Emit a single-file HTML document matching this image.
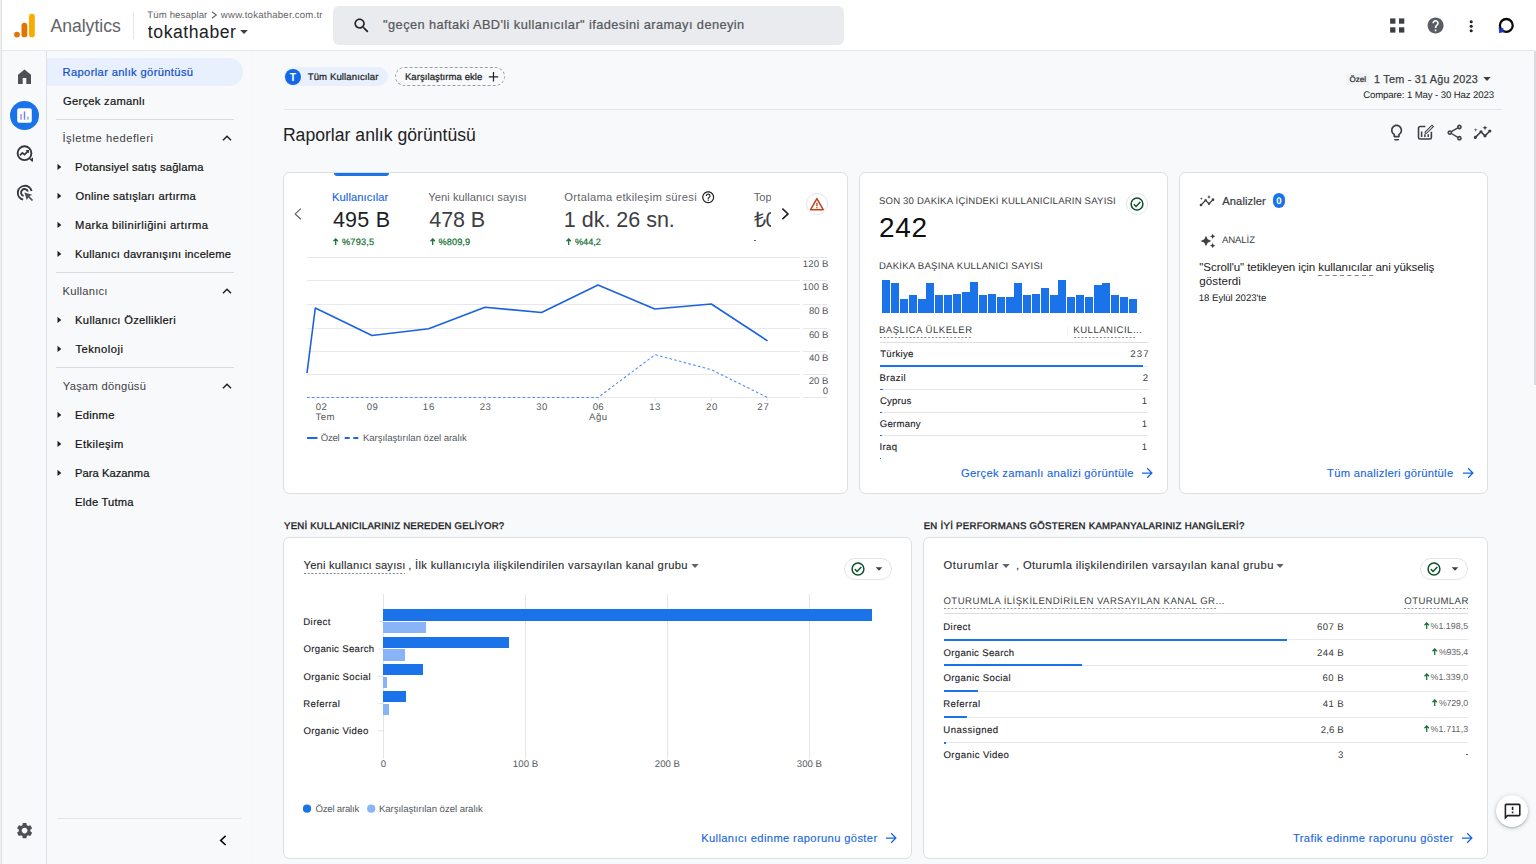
<!DOCTYPE html>
<html lang="tr">
<head>
<meta charset="utf-8">
<title>Analytics | Raporlar anlık görüntüsü</title>
<style>
*{box-sizing:border-box;margin:0;padding:0}
html,body{width:1536px;height:864px;overflow:hidden;background:#f8f9fa}
body{font-family:"Liberation Sans",sans-serif;color:#202124;position:relative}
.b,.t,.i{position:absolute;display:block}
.t{white-space:nowrap;line-height:40px;height:40px}
</style>
</head>
<body>
<div class="b" style="left:0px;top:0px;width:2px;height:864px;background:#f0f1f2;"></div>
<div class="b" style="left:1px;top:0px;width:1px;height:864px;background:#dcdee1;"></div>
<header>
<div class="b" style="left:2px;top:0px;width:1534px;height:50px;background:#fff;"></div>
<div class="b" style="left:2px;top:50px;width:1532px;height:1px;background:#e6e8eb;"></div>
<svg class="i" style="left:13px;top:13px;" width="23" height="25" viewBox="0 0 23 25"><rect x="16" y="0.750" width="5.800" height="23.550" rx="2.900" fill="#f9ab00"/><rect x="8.500" y="9.700" width="5.800" height="14.600" rx="2.900" fill="#e37400"/><circle cx="4" cy="21.550" r="2.850" fill="#e37400"/></svg>
<div class="t" style="top:6px;font-size:17.6px;color:#5f6368;letter-spacing:-0.03px;left:50.54px;">Analytics</div>
<div class="b" style="left:133px;top:12.5px;width:1px;height:26px;background:#e3e5e8;"></div>
<div class="t" style="top:-4px;font-size:9.6px;color:#5f6368;letter-spacing:0.12px;left:147.33px;text-rendering:geometricPrecision;">Tüm hesaplar</div>
<svg class="i" style="left:210px;top:10px;" width="8" height="10" viewBox="0 0 8 10"><path d="M2 1.700L6.300 5L2 8.300" fill="none" stroke="#5f6368" stroke-width="1.100"/></svg>
<div class="t" style="top:-4px;font-size:9.6px;color:#5f6368;letter-spacing:0.23px;left:220.86px;text-rendering:geometricPrecision;">www.tokathaber.com.tr</div>
<div class="t" style="top:12px;font-size:17.6px;color:#202124;letter-spacing:0.55px;left:147.86px;">tokathaber</div>
<svg class="i" style="left:238.9px;top:29.1px;" width="10" height="6" viewBox="0 0 10 6"><path d="M1.10 0.90H8.90L5 5.10Z" fill="#3c4043"/></svg>
<div class="b" style="left:333px;top:6px;width:511px;height:39px;background:#e9ebee;border-radius:6px;"></div>
<svg class="i" style="left:351.9px;top:15.9px;" width="19.2" height="19.2" viewBox="0 0 24 24" fill="#202124"><path d="M15.5 14h-.79l-.28-.27C15.41 12.59 16 11.11 16 9.5 16 5.91 13.09 3 9.5 3S3 5.91 3 9.5 5.91 16 9.5 16c1.61 0 3.09-.59 4.23-1.57l.27.28v.79l5 4.99L20.49 19l-4.99-5zm-6 0C7.01 14 5 11.99 5 9.5S7.01 5 9.5 5 14 7.01 14 9.5 11.99 14 9.5 14z"/></svg>
<div class="t" style="top:5px;font-size:12.8px;color:#54585d;letter-spacing:0.42px;left:383.11px;-webkit-text-stroke:0.220px currentColor;">"geçen haftaki ABD'li kullanıcılar" ifadesini aramayı deneyin</div>
<svg class="i" style="left:1389px;top:17px;" width="17" height="17" viewBox="0 0 17 17"><rect x="1.100" y="1.400" width="5.300" height="5.300" fill="#3c4043"/><rect x="10" y="1.400" width="5.300" height="5.300" fill="#3c4043"/><rect x="1.100" y="10.300" width="5.300" height="5.300" fill="#3c4043"/><rect x="10" y="10.300" width="5.300" height="5.300" fill="#3c4043"/></svg>
<svg class="i" style="left:1426.2px;top:15.7px;" width="19.2" height="19.2" viewBox="0 0 24 24" fill="#5a5e63"><path d="M12 2C6.48 2 2 6.48 2 12s4.48 10 10 10 10-4.48 10-10S17.52 2 12 2zm1 17h-2v-2h2v2zm2.07-7.75l-.9.92C13.45 12.9 13 13.5 13 15h-2v-.5c0-1.1.45-2.1 1.17-2.83l1.24-1.26c.37-.36.59-.86.59-1.41 0-1.1-.9-2-2-2s-2 .9-2 2H8c0-2.21 1.79-4 4-4s4 1.79 4 4c0 .88-.36 1.68-.93 2.25z"/></svg>
<svg class="i" style="left:1466px;top:17px;" width="10" height="18" viewBox="0 0 10 18"><circle cx="5.200" cy="4.700" r="1.550" fill="#202124"/><circle cx="5.200" cy="9.200" r="1.550" fill="#202124"/><circle cx="5.200" cy="13.700" r="1.550" fill="#202124"/></svg>
<svg class="i" style="left:1496px;top:15px;" width="21" height="21" viewBox="0 0 21 21"><circle cx="10.300" cy="10.400" r="6.400" fill="none" stroke="#0a0a0a" stroke-width="2.300"/><path d="M2.600 12.200L3.300 18.200L9 16.600L6.700 15.200L7.600 13.600L5.500 12.800L4.700 14.200Z" fill="#1a38c8"/></svg>
</header>
<nav>
<div class="b" style="left:46px;top:51px;width:1px;height:813px;background:#dddfe2;"></div>
<div class="b" style="left:251px;top:51px;width:1px;height:813px;background:#f5f6f8;"></div>
<svg class="i" style="left:15px;top:67px;" width="19" height="19" viewBox="0 0 19 19"><path d="M9.500 2.600L3 7.800V17H7.700V10.900H11.300V17H16V7.800Z" fill="#4d5156"/></svg>
<div class="b" style="left:10px;top:100.5px;width:29px;height:29px;background:#1a73e8;border-radius:50%;"></div>
<svg class="i" style="left:16px;top:106.5px;" width="17" height="17" viewBox="0 0 17 17"><rect x="1.200" y="1.200" width="14.600" height="14.600" rx="2" fill="#fff"/><rect x="4.300" y="7" width="1.500" height="5.700" fill="#a58bf5"/><rect x="7.750" y="4.400" width="1.500" height="8.300" fill="#7b7ff0"/><rect x="11.200" y="9.500" width="1.500" height="3.200" fill="#7fb2f5"/></svg>
<svg class="i" style="left:15px;top:144px;" width="20" height="20" viewBox="0 0 20 20"><circle cx="9.500" cy="9.200" r="6.900" fill="none" stroke="#33373b" stroke-width="1.900"/><path d="M14.600 14.400L17.300 17V13.700" fill="none" stroke="#33373b" stroke-width="1.400" stroke-linejoin="round"/><path d="M4.900 11.300L7.400 8.800L9.600 10.600L12.700 7.300" fill="none" stroke="#33373b" stroke-width="1.700"/><path d="M10.500 5.900H14V9.400Z" fill="#33373b"/></svg>
<svg class="i" style="left:15px;top:183px;" width="20" height="20" viewBox="0 0 20 20"><path d="M16.600 8.100A7 7 0 1 0 8.100 16.600" fill="none" stroke="#33373b" stroke-width="1.900"/><path d="M12.900 8.600A3.500 3.500 0 1 0 8.600 12.900" fill="none" stroke="#33373b" stroke-width="1.800"/><path d="M9.400 9.400L17.200 11.800L14.400 13.200L18.100 16.900L16.900 18.100L13.200 14.400L11.800 17.200Z" fill="#4d5156"/></svg>
<svg class="i" style="left:15px;top:820.6px;" width="19.2" height="19.2" viewBox="0 0 24 24" fill="#4d5156"><path d="M19.14 12.94c.04-.3.06-.61.06-.94 0-.32-.02-.64-.07-.94l2.03-1.58c.18-.14.23-.41.12-.61l-1.92-3.32c-.12-.22-.37-.29-.59-.22l-2.39.96c-.5-.38-1.03-.7-1.62-.94l-.36-2.54c-.04-.24-.24-.41-.48-.41h-3.84c-.24 0-.43.17-.47.41l-.36 2.54c-.59.24-1.13.57-1.62.94l-2.39-.96c-.22-.08-.47 0-.59.22L2.74 8.87c-.12.21-.08.47.12.61l2.03 1.58c-.05.3-.09.63-.09.94s.02.64.07.94l-2.03 1.58c-.18.14-.23.41-.12.61l1.92 3.32c.12.22.37.29.59.22l2.39-.96c.5.38 1.03.7 1.62.94l.36 2.54c.05.24.24.41.48.41h3.84c.24 0 .44-.17.47-.41l.36-2.54c.59-.24 1.13-.56 1.62-.94l2.39.96c.22.08.47 0 .59-.22l1.92-3.32c.12-.22.07-.47-.12-.61l-2.01-1.58zM12 15.6c-1.98 0-3.6-1.62-3.6-3.6s1.62-3.6 3.6-3.6 3.6 1.62 3.6 3.6-1.62 3.6-3.6 3.6z"/></svg>
<div class="b" style="left:47px;top:58px;width:196.3px;height:28.3px;background:#e8f0fe;border-radius:0 14.200px 14.200px 0;"></div>
<div class="t" style="top:52px;font-size:11.2px;color:#1450cc;letter-spacing:0.35px;left:62.51px;-webkit-text-stroke:0.220px currentColor;">Raporlar anlık görüntüsü</div>
<div class="t" style="top:81px;font-size:11.2px;color:#141414;letter-spacing:0.28px;left:62.92px;-webkit-text-stroke:0.220px currentColor;">Gerçek zamanlı</div>
<div class="b" style="left:56px;top:119px;width:178px;height:1px;background:#dadce0;"></div>
<div class="t" style="top:118px;font-size:11.2px;color:#3c4043;letter-spacing:0.53px;left:62.48px;">İşletme hedefleri</div>
<svg class="i" style="left:221.1px;top:134.3px;" width="12" height="8" viewBox="0 0 12 8"><path d="M2 6.300L6 2.300L10 6.300" fill="none" stroke="#202124" stroke-width="1.500"/></svg>
<div class="t" style="top:147px;font-size:11.2px;color:#141414;letter-spacing:0.2px;left:75.12px;-webkit-text-stroke:0.220px currentColor;">Potansiyel satış sağlama</div>
<svg class="i" style="left:56px;top:163px;" width="7" height="8" viewBox="0 0 7 8"><path d="M1.500 0.700L5.300 3.900L1.500 7.100Z" fill="#202124"/></svg>
<div class="t" style="top:176px;font-size:11.2px;color:#141414;letter-spacing:0.31px;left:75.47px;-webkit-text-stroke:0.220px currentColor;">Online satışları artırma</div>
<svg class="i" style="left:56px;top:192px;" width="7" height="8" viewBox="0 0 7 8"><path d="M1.500 0.700L5.300 3.900L1.500 7.100Z" fill="#202124"/></svg>
<div class="t" style="top:205px;font-size:11.2px;color:#141414;letter-spacing:0.45px;left:75.12px;-webkit-text-stroke:0.220px currentColor;">Marka bilinirliğini artırma</div>
<svg class="i" style="left:56px;top:221px;" width="7" height="8" viewBox="0 0 7 8"><path d="M1.500 0.700L5.300 3.900L1.500 7.100Z" fill="#202124"/></svg>
<div class="t" style="top:234px;font-size:11.2px;color:#141414;letter-spacing:0.23px;left:75.12px;-webkit-text-stroke:0.220px currentColor;">Kullanıcı davranışını inceleme</div>
<svg class="i" style="left:56px;top:250px;" width="7" height="8" viewBox="0 0 7 8"><path d="M1.500 0.700L5.300 3.900L1.500 7.100Z" fill="#202124"/></svg>
<div class="b" style="left:56px;top:272px;width:178px;height:1px;background:#dadce0;"></div>
<div class="t" style="top:271px;font-size:11.2px;color:#3c4043;letter-spacing:0.26px;left:62.49px;">Kullanıcı</div>
<svg class="i" style="left:221.1px;top:287.3px;" width="12" height="8" viewBox="0 0 12 8"><path d="M2 6.300L6 2.300L10 6.300" fill="none" stroke="#202124" stroke-width="1.500"/></svg>
<div class="t" style="top:300px;font-size:11.2px;color:#141414;letter-spacing:0.3px;left:75.12px;-webkit-text-stroke:0.220px currentColor;">Kullanıcı Özellikleri</div>
<svg class="i" style="left:56px;top:316px;" width="7" height="8" viewBox="0 0 7 8"><path d="M1.500 0.700L5.300 3.900L1.500 7.100Z" fill="#202124"/></svg>
<div class="t" style="top:329px;font-size:11.2px;color:#141414;letter-spacing:0.48px;left:75.53px;-webkit-text-stroke:0.220px currentColor;">Teknoloji</div>
<svg class="i" style="left:56px;top:345px;" width="7" height="8" viewBox="0 0 7 8"><path d="M1.500 0.700L5.300 3.900L1.500 7.100Z" fill="#202124"/></svg>
<div class="b" style="left:56px;top:367px;width:178px;height:1px;background:#dadce0;"></div>
<div class="t" style="top:366px;font-size:11.2px;color:#3c4043;letter-spacing:0.26px;left:62.8px;">Yaşam döngüsü</div>
<svg class="i" style="left:221.1px;top:382.3px;" width="12" height="8" viewBox="0 0 12 8"><path d="M2 6.300L6 2.300L10 6.300" fill="none" stroke="#202124" stroke-width="1.500"/></svg>
<div class="t" style="top:395px;font-size:11.2px;color:#141414;letter-spacing:0.28px;left:75.12px;-webkit-text-stroke:0.220px currentColor;">Edinme</div>
<svg class="i" style="left:56px;top:411px;" width="7" height="8" viewBox="0 0 7 8"><path d="M1.500 0.700L5.300 3.900L1.500 7.100Z" fill="#202124"/></svg>
<div class="t" style="top:424px;font-size:11.2px;color:#141414;letter-spacing:0.43px;left:75.12px;-webkit-text-stroke:0.220px currentColor;">Etkileşim</div>
<svg class="i" style="left:56px;top:440px;" width="7" height="8" viewBox="0 0 7 8"><path d="M1.500 0.700L5.300 3.900L1.500 7.100Z" fill="#202124"/></svg>
<div class="t" style="top:453px;font-size:11.2px;color:#141414;letter-spacing:0.03px;left:75.12px;-webkit-text-stroke:0.220px currentColor;">Para Kazanma</div>
<svg class="i" style="left:56px;top:469px;" width="7" height="8" viewBox="0 0 7 8"><path d="M1.500 0.700L5.300 3.900L1.500 7.100Z" fill="#202124"/></svg>
<div class="t" style="top:482px;font-size:11.2px;color:#141414;letter-spacing:0.21px;left:75.12px;-webkit-text-stroke:0.220px currentColor;">Elde Tutma</div>
<div class="b" style="left:57px;top:818px;width:184.2px;height:1px;background:#e3e5e8;"></div>
<svg class="i" style="left:217px;top:834px;" width="12" height="13" viewBox="0 0 12 13"><path d="M8.600 1.800L3.700 6.400L8.600 11" fill="none" stroke="#0a0a0a" stroke-width="1.600"/></svg>
</nav>
<main>
<section>
<div class="b" style="left:284.3px;top:67px;width:104px;height:19.4px;background:#e8f0fe;border-radius:9.700px;"></div>
<div class="b" style="left:285px;top:69px;width:16px;height:16px;background:#1467e6;border-radius:50%;"></div>
<div class="t" style="top:58px;font-size:10.4px;color:#fff;font-weight:700;left:93px;width:400px;text-align:center;">T</div>
<div class="t" style="top:58px;font-size:9.6px;color:#202124;letter-spacing:0.1px;left:307.68px;-webkit-text-stroke:0.220px currentColor;text-rendering:geometricPrecision;">Tüm Kullanıcılar</div>
<div class="b" style="left:395.2px;top:67px;width:110px;height:19.4px;border:1px dashed #9aa0a6;border-radius:9.700px;"></div>
<div class="t" style="top:58px;font-size:9.6px;color:#202124;letter-spacing:0.04px;left:404.92px;-webkit-text-stroke:0.220px currentColor;text-rendering:geometricPrecision;">Karşılaştırma ekle</div>
<svg class="i" style="left:488px;top:71px;" width="12" height="12" viewBox="0 0 12 12"><path d="M0.800 5.800H10.200M5.500 1.100V10.500" fill="none" stroke="#202124" stroke-width="1.200"/></svg>
<div class="b" style="left:1345.8px;top:72.5px;width:23.4px;height:12.8px;background:#f1f3f4;border-radius:2px;"></div>
<div class="t" style="top:60px;font-size:8px;color:#202124;letter-spacing:0.04px;left:1349.54px;-webkit-text-stroke:0.220px currentColor;text-rendering:geometricPrecision;">Özel</div>
<div class="t" style="top:59px;font-size:10.8px;color:#3c4043;letter-spacing:0.24px;left:1374.03px;-webkit-text-stroke:0.250px currentColor;">1 Tem - 31 Ağu 2023</div>
<svg class="i" style="left:1481.8px;top:75.6px;" width="10" height="6" viewBox="0 0 10 6"><path d="M1.30 1.10H8.70L5 4.90Z" fill="#3c4043"/></svg>
<div class="t" style="top:76px;font-size:9.6px;color:#202124;letter-spacing:-0.11px;left:1363.16px;text-rendering:geometricPrecision;">Compare: 1 May - 30 Haz 2023</div>
<div class="b" style="left:283.5px;top:109px;width:1218px;height:1px;background:#e3e5e8;"></div>
<div class="t" style="top:115px;font-size:17.6px;color:#202124;letter-spacing:0.01px;left:282.9px;">Raporlar anlık görüntüsü</div>
<svg class="i" style="left:1386.8px;top:123.1px;" width="19.2" height="19.2" viewBox="0 0 24 24" fill="#3c4043"><path d="M9 21c0 .55.45 1 1 1h4c.55 0 1-.45 1-1v-1H9v1zm3-19C8.14 2 5 5.14 5 9c0 2.38 1.19 4.47 3 5.74V17c0 .55.45 1 1 1h6c.55 0 1-.45 1-1v-2.26c1.81-1.27 3-3.36 3-5.74 0-3.86-3.14-7-7-7zm2.85 11.1l-.85.6V16h-4v-2.3l-.85-.6C7.8 12.16 7 10.63 7 9c0-2.76 2.24-5 5-5s5 2.24 5 5c0 1.63-.8 3.16-2.15 4.1z"/></svg>
<svg class="i" style="left:1414.8px;top:122.6px;" width="19.2" height="19.2" viewBox="0 0 19.2 19.2"><g transform="scale(0.8)" fill="none" stroke="#3c4043"><path d="M13 4.400H6.400a2 2 0 0 0-2 2V18a2 2 0 0 0 2 2H18.500a2 2 0 0 0 2-2V11" stroke-width="2"/><path d="M12.800 11.200L21.300 2.700L23 4.400L14.500 12.900H12.800Z" stroke-width="1.300"/><path d="M8.300 10.500V17.600M12.400 14V17.600M16.600 14.200V17.600" stroke-width="1.900"/></g></svg>
<svg class="i" style="left:1444.8px;top:122.9px;" width="19.2" height="19.2" viewBox="0 0 24 24" fill="#3c4043"><path d="M18 16.08c-.76 0-1.44.3-1.96.77L8.91 12.7c.05-.23.09-.46.09-.7s-.04-.47-.09-.7l7.05-4.11c.54.5 1.25.81 2.04.81 1.66 0 3-1.34 3-3s-1.34-3-3-3-3 1.34-3 3c0 .24.04.47.09.7L8.04 9.81C7.5 9.31 6.79 9 6 9c-1.66 0-3 1.34-3 3s1.34 3 3 3c.79 0 1.5-.31 2.04-.81l7.12 4.16c-.05.21-.08.43-.08.65 0 1.61 1.31 2.92 2.92 2.92s2.92-1.31 2.92-2.92-1.31-2.92-2.92-2.92zM18 4c.55 0 1 .45 1 1s-.45 1-1 1-1-.45-1-1 .45-1 1-1zM6 13c-.55 0-1-.45-1-1s.45-1 1-1 1 .45 1 1-.45 1-1 1zm12 7.02c-.55 0-1-.45-1-1s.45-1 1-1 1 .45 1 1-.45 1-1 1z"/></svg>
<svg class="i" style="left:1473.4px;top:122.9px;" width="19.2" height="19.2" viewBox="0 0 24 24" fill="#3c4043"><path d="M21 8c-1.45 0-2.26 1.44-1.93 2.51l-3.55 3.56c-.3-.09-.74-.09-1.04 0l-2.55-2.55C12.27 10.45 11.46 9 10 9c-1.45 0-2.27 1.44-1.93 2.52l-4.56 4.55C2.44 15.74 1 16.55 1 18c0 1.1.9 2 2 2 1.45 0 2.26-1.44 1.93-2.51l4.55-4.56c.3.09.74.09 1.04 0l2.55 2.55C12.73 16.55 13.54 18 15 18c1.450 0 2.27-1.44 1.93-2.52l3.56-3.55c1.07.33 2.51-.48 2.51-1.93 0-1.1-.9-2-2-2z M15 9l.94-2.07L18 6l-2.06-.93L15 3l-.92 2.07L12 6l2.08.93z M3.5 11L4 9l2-.5L4 8l-.5-2L3 8l-2 .5L3 9z"/></svg>
</section>
<div class="b" style="left:283px;top:172px;width:565px;height:322px;background:#fff;border:1px solid #dcdee2;border-radius:6.400px;"></div>
<div class="b" style="left:859px;top:172px;width:309px;height:322px;background:#fff;border:1px solid #dcdee2;border-radius:6.400px;"></div>
<div class="b" style="left:1179px;top:172px;width:309px;height:322px;background:#fff;border:1px solid #dcdee2;border-radius:6.400px;"></div>
<div class="b" style="left:283px;top:537px;width:629px;height:322px;background:#fff;border:1px solid #dcdee2;border-radius:6.400px;"></div>
<div class="b" style="left:923px;top:537px;width:565px;height:322px;background:#fff;border:1px solid #dcdee2;border-radius:6.400px;"></div>
<section>
<div class="b" style="left:334px;top:173px;width:55px;height:3.4px;background:#1a73e8;border-radius:0 0 3px 3px;"></div>
<svg class="i" style="left:292px;top:207px;" width="12" height="14" viewBox="0 0 12 14"><path d="M8.800 1.600L3.200 6.900L8.800 12.200" fill="none" stroke="#5f6368" stroke-width="1.200"/></svg>
<div class="t" style="top:177px;font-size:11.2px;color:#1766e2;letter-spacing:0.09px;left:331.94px;-webkit-text-stroke:0.120px currentColor;">Kullanıcılar</div>
<div class="t" style="top:200px;font-size:21.5px;color:#202124;letter-spacing:0.26px;left:332.9px;">495 B</div>
<svg class="i" style="left:332.3px;top:237px;" width="8" height="9" viewBox="0 0 8 9"><path d="M3.700 8V2M1.500 4.300L3.700 2L5.900 4.300" fill="none" stroke="#137333" stroke-width="1.250"/></svg>
<div class="t" style="top:222px;font-size:9.2px;color:#137333;letter-spacing:0.22px;left:341.92px;-webkit-text-stroke:0.220px currentColor;text-rendering:geometricPrecision;">%793,5</div>
<div class="t" style="top:177px;font-size:11.2px;color:#5f6368;letter-spacing:0.03px;left:428.28px;">Yeni kullanıcı sayısı</div>
<div class="t" style="top:200px;font-size:21.5px;color:#3c4043;letter-spacing:-0.08px;left:429.34px;">478 B</div>
<svg class="i" style="left:429px;top:237px;" width="8" height="9" viewBox="0 0 8 9"><path d="M3.700 8V2M1.500 4.300L3.700 2L5.900 4.300" fill="none" stroke="#137333" stroke-width="1.250"/></svg>
<div class="t" style="top:222px;font-size:9.2px;color:#137333;letter-spacing:0.07px;left:438.6px;-webkit-text-stroke:0.220px currentColor;text-rendering:geometricPrecision;">%809,9</div>
<div class="t" style="top:177px;font-size:11.2px;color:#5f6368;letter-spacing:0.28px;left:564.34px;">Ortalama etkileşim süresi</div>
<svg class="i" style="left:700.8px;top:189.8px;" width="14.4" height="14.4" viewBox="0 0 24 24" fill="#202124"><path d="M11 18h2v-2h-2v2zm1-16C6.48 2 2 6.48 2 12s4.48 10 10 10 10-4.48 10-10S17.52 2 12 2zm0 18c-4.41 0-8-3.59-8-8s3.59-8 8-8 8 3.59 8 8-3.59 8-8 8zm0-14c-2.21 0-4 1.79-4 4h2c0-1.1.9-2 2-2s2 .9 2 2c0 2-3 1.75-3 5h2c0-2.25 3-2.5 3-5 0-2.21-1.79-4-4-4z"/></svg>
<div class="t" style="top:200px;font-size:21.5px;color:#3c4043;letter-spacing:-0.02px;left:563.86px;">1 dk. 26 sn.</div>
<svg class="i" style="left:565.3px;top:237px;" width="8" height="9" viewBox="0 0 8 9"><path d="M3.700 8V2M1.500 4.300L3.700 2L5.900 4.300" fill="none" stroke="#137333" stroke-width="1.250"/></svg>
<div class="t" style="top:222px;font-size:9.2px;color:#137333;left:574.93px;-webkit-text-stroke:0.220px currentColor;text-rendering:geometricPrecision;">%44,2</div>
<div class="b" style="left:753.700px;top:180px;width:17.300px;height:70px;overflow:hidden">
<div class="t" style="left:0;top:-3px;font-size:11.200px;color:#5f6368">Top</div>
<div class="t" style="left:0;top:20px;font-size:21.500px;color:#3c4043;letter-spacing:-0.300px">₺0</div>
</div>
<div class="b" style="left:753.5px;top:240.2px;width:2.8px;height:1px;background:#5f6368;"></div>
<svg class="i" style="left:779px;top:207px;" width="12" height="14" viewBox="0 0 12 14"><path d="M3.400 1.600L9 6.900L3.400 12.200" fill="none" stroke="#202124" stroke-width="1.600"/></svg>
<div class="b" style="left:805.7px;top:192.8px;width:22px;height:22px;background:#fff;border:1px solid #e3e5e8;border-radius:50%;"></div>
<svg class="i" style="left:808px;top:196px;" width="18" height="16" viewBox="0 0 18 16"><path d="M8.900 2.600L15.200 13.700H2.600Z" fill="none" stroke="#c5401a" stroke-width="1.500" stroke-linejoin="round"/><rect x="8.250" y="6.700" width="1.300" height="3.600" fill="#c5401a"/><rect x="8.250" y="11.100" width="1.300" height="1.300" fill="#c5401a"/></svg>
<svg class="i" style="left:0px;top:0px;pointer-events:none" width="1536" height="864" viewBox="0 0 1536 864"><rect x="307" y="257" width="493" height="1" fill="#e6e8eb"/><rect x="803" y="257" width="24" height="1" fill="#e6e8eb"/><rect x="307" y="280" width="493" height="1" fill="#e6e8eb"/><rect x="803" y="280" width="24" height="1" fill="#e6e8eb"/><rect x="307" y="304" width="493" height="1" fill="#e6e8eb"/><rect x="803" y="304" width="24" height="1" fill="#e6e8eb"/><rect x="307" y="328" width="493" height="1" fill="#e6e8eb"/><rect x="803" y="328" width="24" height="1" fill="#e6e8eb"/><rect x="307" y="351" width="493" height="1" fill="#e6e8eb"/><rect x="803" y="351" width="24" height="1" fill="#e6e8eb"/><rect x="307" y="374" width="493" height="1" fill="#e6e8eb"/><rect x="803" y="374" width="24" height="1" fill="#e6e8eb"/><rect x="307" y="397" width="493" height="1" fill="#e6e8eb"/><rect x="803" y="397" width="24" height="1" fill="#e6e8eb"/><rect x="314.80" y="397.800" width="1" height="3.500" fill="#e6e8eb"/><rect x="371.90" y="397.800" width="1" height="3.500" fill="#e6e8eb"/><rect x="428.40" y="397.800" width="1" height="3.500" fill="#e6e8eb"/><rect x="484.90" y="397.800" width="1" height="3.500" fill="#e6e8eb"/><rect x="541.40" y="397.800" width="1" height="3.500" fill="#e6e8eb"/><rect x="597.90" y="397.800" width="1" height="3.500" fill="#e6e8eb"/><rect x="654.50" y="397.800" width="1" height="3.500" fill="#e6e8eb"/><rect x="711.00" y="397.800" width="1" height="3.500" fill="#e6e8eb"/><rect x="767.00" y="397.800" width="1" height="3.500" fill="#e6e8eb"/><polyline fill="none" stroke="#1a62e2" stroke-width="1.600" stroke-linejoin="round" points="307,373 315.300,308 372,335.500 428.700,328.700 485,307.300 541.500,312.500 598,285 654.800,309 711.300,304 767.500,340.800"/><polyline fill="none" stroke="#4f8df5" stroke-width="1.100" stroke-dasharray="2.600,2.300" points="307,397.500 598,397.500 655,354.700 711.300,369.700 767.500,397.500"/><rect x="307" y="437" width="10.500" height="2" fill="#1a6ae8"/><rect x="344.700" y="437" width="5" height="2" fill="#1a6ae8"/><rect x="353.300" y="437" width="5" height="2" fill="#1a6ae8"/></svg>
<div class="t" style="top:245px;font-size:9.6px;color:#55595e;letter-spacing:0.13px;left:802.87px;text-rendering:geometricPrecision;">120 B</div>
<div class="t" style="top:268px;font-size:9.6px;color:#55595e;letter-spacing:0.13px;left:802.87px;text-rendering:geometricPrecision;">100 B</div>
<div class="t" style="top:292px;font-size:9.6px;color:#55595e;letter-spacing:-0.11px;left:808.91px;text-rendering:geometricPrecision;">80 B</div>
<div class="t" style="top:316px;font-size:9.6px;color:#55595e;letter-spacing:-0.11px;left:808.9px;text-rendering:geometricPrecision;">60 B</div>
<div class="t" style="top:339px;font-size:9.6px;color:#55595e;letter-spacing:-0.14px;left:808.98px;text-rendering:geometricPrecision;">40 B</div>
<div class="t" style="top:362px;font-size:9.6px;color:#55595e;letter-spacing:-0.1px;left:808.86px;text-rendering:geometricPrecision;">20 B</div>
<div class="t" style="top:372px;font-size:9.6px;color:#55595e;right:708px;text-rendering:geometricPrecision;">0</div>
<div class="t" style="top:388px;font-size:9.6px;color:#55595e;letter-spacing:0.57px;left:315.66px;text-rendering:geometricPrecision;">02</div>
<div class="t" style="top:388px;font-size:9.6px;color:#55595e;letter-spacing:0.38px;left:366.81px;text-rendering:geometricPrecision;">09</div>
<div class="t" style="top:388px;font-size:9.6px;color:#55595e;letter-spacing:0.91px;left:422.83px;text-rendering:geometricPrecision;">16</div>
<div class="t" style="top:388px;font-size:9.6px;color:#55595e;letter-spacing:0.42px;left:479.66px;text-rendering:geometricPrecision;">23</div>
<div class="t" style="top:388px;font-size:9.6px;color:#55595e;letter-spacing:0.46px;left:536.17px;text-rendering:geometricPrecision;">30</div>
<div class="t" style="top:388px;font-size:9.6px;color:#55595e;letter-spacing:0.39px;left:592.65px;text-rendering:geometricPrecision;">06</div>
<div class="t" style="top:388px;font-size:9.6px;color:#55595e;letter-spacing:0.52px;left:649.23px;text-rendering:geometricPrecision;">13</div>
<div class="t" style="top:388px;font-size:9.6px;color:#55595e;letter-spacing:0.5px;left:706.12px;text-rendering:geometricPrecision;">20</div>
<div class="t" style="top:388px;font-size:9.6px;color:#55595e;letter-spacing:0.97px;left:757.13px;text-rendering:geometricPrecision;">27</div>
<div class="t" style="top:398px;font-size:9.6px;color:#55595e;letter-spacing:0.47px;left:315.55px;text-rendering:geometricPrecision;">Tem</div>
<div class="t" style="top:398px;font-size:9.6px;color:#55595e;letter-spacing:0.53px;left:589.09px;text-rendering:geometricPrecision;">Ağu</div>
<div class="t" style="top:419px;font-size:9.6px;color:#55595e;letter-spacing:-0.25px;left:320.76px;text-rendering:geometricPrecision;">Özel</div>
<div class="t" style="top:419px;font-size:9.6px;color:#55595e;letter-spacing:-0.04px;left:362.92px;text-rendering:geometricPrecision;">Karşılaştırılan özel aralık</div>
</section>
<section>
<div class="t" style="top:182px;font-size:9.6px;color:#3c4043;letter-spacing:0.18px;left:878.91px;text-rendering:geometricPrecision;">SON 30 DAKİKA İÇİNDEKİ KULLANICILARIN SAYISI</div>
<div class="b" style="left:1125.7px;top:192.8px;width:22px;height:22px;background:#fff;border:1px solid #e3e5e8;border-radius:50%;"></div>
<svg class="i" style="left:1127.7px;top:194.8px;" width="18" height="18" viewBox="0 0 18 18"><circle cx="9" cy="9" r="5.8999999999999995" fill="none" stroke="#0b5229" stroke-width="1.500"/><path d="M5.800 9.200L8.100 11.500L12.300 7.100" fill="none" stroke="#0b5229" stroke-width="1.500"/></svg>
<div class="t" style="top:208px;font-size:28px;color:#0f0f0f;letter-spacing:0.66px;left:879.04px;">242</div>
<div class="t" style="top:247px;font-size:9.6px;color:#3c4043;letter-spacing:0.23px;left:878.93px;text-rendering:geometricPrecision;">DAKİKA BAŞINA KULLANICI SAYISI</div>
<svg class="i" style="left:0px;top:0px;pointer-events:none" width="1536" height="864" viewBox="0 0 1536 864"><rect x="882" y="280" width="8" height="33" fill="#1a73e8"/><rect x="891" y="283" width="8" height="30" fill="#1a73e8"/><rect x="900" y="299" width="8" height="14" fill="#1a73e8"/><rect x="909" y="295" width="8" height="18" fill="#1a73e8"/><rect x="918" y="299" width="8" height="14" fill="#1a73e8"/><rect x="926" y="283" width="8" height="30" fill="#1a73e8"/><rect x="935" y="295" width="8" height="18" fill="#1a73e8"/><rect x="944" y="295" width="8" height="18" fill="#1a73e8"/><rect x="953" y="294" width="8" height="19" fill="#1a73e8"/><rect x="962" y="292" width="8" height="21" fill="#1a73e8"/><rect x="970" y="282" width="8" height="31" fill="#1a73e8"/><rect x="979" y="295" width="8" height="18" fill="#1a73e8"/><rect x="988" y="294" width="8" height="19" fill="#1a73e8"/><rect x="997" y="297" width="8" height="16" fill="#1a73e8"/><rect x="1006" y="297" width="8" height="16" fill="#1a73e8"/><rect x="1014" y="283" width="8" height="30" fill="#1a73e8"/><rect x="1023" y="295" width="8" height="18" fill="#1a73e8"/><rect x="1032" y="294" width="8" height="19" fill="#1a73e8"/><rect x="1041" y="288" width="8" height="25" fill="#1a73e8"/><rect x="1050" y="295" width="8" height="18" fill="#1a73e8"/><rect x="1058" y="280" width="8" height="33" fill="#1a73e8"/><rect x="1067" y="297" width="8" height="16" fill="#1a73e8"/><rect x="1076" y="295" width="8" height="18" fill="#1a73e8"/><rect x="1085" y="297" width="8" height="16" fill="#1a73e8"/><rect x="1094" y="285" width="8" height="28" fill="#1a73e8"/><rect x="1102" y="283" width="8" height="30" fill="#1a73e8"/><rect x="1111" y="295" width="8" height="18" fill="#1a73e8"/><rect x="1120" y="297" width="8" height="16" fill="#1a73e8"/><rect x="1129" y="299" width="8" height="14" fill="#1a73e8"/><rect x="1138" y="313" width="2" height="0.600" fill="#c6dafc"/></svg>
<div class="t" style="top:311px;font-size:9.6px;color:#3c4043;letter-spacing:0.49px;left:878.93px;text-rendering:geometricPrecision;">BAŞLICA ÜLKELER</div>
<svg class="i" style="left:879.7px;top:336.7px;" width="91.79999999999995" height="1" viewBox="0 0 91.79999999999995 1"><line x1="0" y1="0.500" x2="91.79999999999995" y2="0.500" stroke="#8a8f94" stroke-width="1" stroke-dasharray="2,1.700"/></svg>
<div class="t" style="top:311px;font-size:9.6px;color:#3c4043;letter-spacing:0.46px;left:1073.36px;text-rendering:geometricPrecision;">KULLANICIL...</div>
<svg class="i" style="left:1074.1px;top:336.7px;" width="60.90000000000009" height="1" viewBox="0 0 60.90000000000009 1"><line x1="0" y1="0.500" x2="60.90000000000009" y2="0.500" stroke="#8a8f94" stroke-width="1" stroke-dasharray="2,1.700"/></svg>
<div class="b" style="left:1067px;top:326px;width:1px;height:12px;background:#f1f3f4;"></div>
<div class="b" style="left:880px;top:342px;width:268px;height:1px;background:#dcdee1;"></div>
<div class="t" style="top:335px;font-size:9.6px;color:#202124;letter-spacing:0.28px;left:880.2px;-webkit-text-stroke:0.120px currentColor;text-rendering:geometricPrecision;">Türkiye</div>
<div class="t" style="top:335px;font-size:9.6px;color:#3c4043;letter-spacing:1.18px;left:1130.18px;text-rendering:geometricPrecision;">237</div>
<div class="b" style="left:880px;top:366px;width:268px;height:1px;background:#e3e5e8;"></div>
<div class="b" style="left:880px;top:365px;width:263.3px;height:2px;background:#1a73e8;"></div>
<div class="t" style="top:359px;font-size:9.6px;color:#202124;letter-spacing:0.41px;left:879.52px;-webkit-text-stroke:0.120px currentColor;text-rendering:geometricPrecision;">Brazil</div>
<div class="t" style="top:359px;font-size:9.6px;color:#3c4043;right:388px;text-rendering:geometricPrecision;">2</div>
<div class="b" style="left:880px;top:389px;width:268px;height:1px;background:#e3e5e8;"></div>
<div class="b" style="left:880px;top:388.5px;width:2.7px;height:1.5px;background:#1a73e8;"></div>
<div class="t" style="top:382px;font-size:9.6px;color:#202124;letter-spacing:0.19px;left:879.89px;-webkit-text-stroke:0.120px currentColor;text-rendering:geometricPrecision;">Cyprus</div>
<div class="t" style="top:382px;font-size:9.6px;color:#3c4043;right:389px;text-rendering:geometricPrecision;">1</div>
<div class="b" style="left:880px;top:412px;width:268px;height:1px;background:#e3e5e8;"></div>
<div class="b" style="left:880px;top:411.5px;width:1.5px;height:1.5px;background:#1a73e8;"></div>
<div class="t" style="top:405px;font-size:9.6px;color:#202124;letter-spacing:0.24px;left:879.72px;-webkit-text-stroke:0.120px currentColor;text-rendering:geometricPrecision;">Germany</div>
<div class="t" style="top:405px;font-size:9.6px;color:#3c4043;right:389px;text-rendering:geometricPrecision;">1</div>
<div class="b" style="left:880px;top:435px;width:268px;height:1px;background:#e3e5e8;"></div>
<div class="b" style="left:880px;top:434.5px;width:1.5px;height:1.5px;background:#1a73e8;"></div>
<div class="t" style="top:428px;font-size:9.6px;color:#202124;letter-spacing:0.39px;left:879.43px;-webkit-text-stroke:0.120px currentColor;text-rendering:geometricPrecision;">Iraq</div>
<div class="t" style="top:428px;font-size:9.6px;color:#3c4043;right:389px;text-rendering:geometricPrecision;">1</div>
<div class="b" style="left:880px;top:457.5px;width:1.2px;height:1.5px;background:#1a73e8;"></div>
<div class="t" style="top:453px;font-size:11.2px;color:#1766e2;letter-spacing:0.31px;left:960.94px;-webkit-text-stroke:0.120px currentColor;">Gerçek zamanlı analizi görüntüle</div>
<svg class="i" style="left:1141.3px;top:467px;" width="12" height="12" viewBox="0 0 12 12"><path d="M1 6H10.600M6.200 1.300L10.900 6L6.200 10.700" fill="none" stroke="#1766e2" stroke-width="1.250"/></svg>
</section>
<section>
<svg class="i" style="left:1199.2px;top:192.7px;" width="16" height="16" viewBox="0 0 24 24" fill="#3c4043"><path d="M21 8c-1.45 0-2.26 1.44-1.93 2.51l-3.55 3.56c-.3-.09-.74-.09-1.04 0l-2.55-2.55C12.27 10.45 11.46 9 10 9c-1.45 0-2.27 1.44-1.93 2.52l-4.56 4.55C2.44 15.74 1 16.55 1 18c0 1.1.9 2 2 2 1.45 0 2.26-1.44 1.93-2.51l4.55-4.56c.3.09.74.09 1.04 0l2.55 2.55C12.73 16.55 13.54 18 15 18c1.450 0 2.27-1.44 1.93-2.52l3.56-3.55c1.07.33 2.51-.48 2.51-1.93 0-1.1-.9-2-2-2z M15 9l.94-2.07L18 6l-2.06-.93L15 3l-.92 2.07L12 6l2.08.93z M3.5 11L4 9l2-.5L4 8l-.5-2L3 8l-2 .5L3 9z"/></svg>
<div class="t" style="top:181px;font-size:11.2px;color:#3c4043;letter-spacing:0.08px;left:1222.25px;-webkit-text-stroke:0.220px currentColor;">Analizler</div>
<div class="b" style="left:1272.7px;top:193.3px;width:12.5px;height:14.7px;background:#1a73e8;border-radius:6.200px;"></div>
<div class="t" style="top:182px;font-size:9.6px;color:#fff;font-weight:700;left:1079px;width:400px;text-align:center;text-rendering:geometricPrecision;">0</div>
<svg class="i" style="left:1200px;top:233px;" width="16" height="16" viewBox="0 0 24 24" fill="#3c4043"><path d="M19 9l1.25-2.75L23 5l-2.75-1.25L19 1l-1.25 2.75L15 5l2.75 1.25L19 9zm-7.5.5L9 4 6.500 9.500 1 12l5.500 2.500L9 20l2.500-5.500L17 12l-5.500-2.500zM19 15l-1.250 2.750L15 19l2.750 1.250L19 23l1.250-2.750L23 19l-2.750-1.250L19 15z"/></svg>
<div class="t" style="top:221px;font-size:9.6px;color:#3c4043;letter-spacing:-0.11px;left:1221.97px;text-rendering:geometricPrecision;">ANALİZ</div>
<div class="t" style="top:247px;font-size:11.6px;color:#202124;letter-spacing:-0.11px;left:1199.33px;">"Scroll'u" tetikleyen için kullanıcılar ani yükseliş</div>
<svg class="i" style="left:1317.7px;top:275px;" width="58" height="1" viewBox="0 0 58 1"><line x1="0" y1="0.500" x2="58" y2="0.500" stroke="#80868b" stroke-width="1" stroke-dasharray="4.200,3.100"/></svg>
<div class="t" style="top:261px;font-size:11.6px;color:#202124;letter-spacing:0.05px;left:1199.33px;">gösterdi</div>
<div class="t" style="top:279px;font-size:9.6px;color:#202124;letter-spacing:-0.03px;left:1198.79px;text-rendering:geometricPrecision;">18 Eylül 2023'te</div>
<div class="t" style="top:453px;font-size:11.2px;color:#1766e2;letter-spacing:0.29px;left:1327.06px;-webkit-text-stroke:0.120px currentColor;">Tüm analizleri görüntüle</div>
<svg class="i" style="left:1461.7px;top:467px;" width="12" height="12" viewBox="0 0 12 12"><path d="M1 6H10.600M6.200 1.300L10.900 6L6.200 10.700" fill="none" stroke="#1766e2" stroke-width="1.250"/></svg>
</section>
<div class="t" style="top:507px;font-size:9.6px;color:#202124;letter-spacing:0.23px;left:284.01px;-webkit-text-stroke:0.350px currentColor;text-rendering:geometricPrecision;">YENİ KULLANICILARINIZ NEREDEN GELİYOR?</div>
<div class="t" style="top:507px;font-size:9.6px;color:#202124;letter-spacing:0.29px;left:923.64px;-webkit-text-stroke:0.350px currentColor;text-rendering:geometricPrecision;">EN İYİ PERFORMANS GÖSTEREN KAMPANYALARINIZ HANGİLERİ?</div>
<section>
<div class="t" style="top:545px;font-size:11.2px;color:#2a2d31;letter-spacing:0.2px;left:303.54px;-webkit-text-stroke:0.120px currentColor;">Yeni kullanıcı sayısı</div>
<svg class="i" style="left:303.8px;top:573.2px;" width="100.89999999999998" height="1" viewBox="0 0 100.89999999999998 1"><line x1="0" y1="0.500" x2="100.89999999999998" y2="0.500" stroke="#80868b" stroke-width="1" stroke-dasharray="2,1.700"/></svg>
<div class="t" style="top:545px;font-size:11.2px;color:#2a2d31;letter-spacing:0.33px;left:408.19px;-webkit-text-stroke:0.120px currentColor;">, İlk kullanıcıyla ilişkilendirilen varsayılan kanal grubu</div>
<svg class="i" style="left:689.5px;top:562.6px;" width="10" height="6" viewBox="0 0 10 6"><path d="M1.30 1.10H8.70L5 4.90Z" fill="#5f6368"/></svg>
<div class="b" style="left:844.2px;top:557.5px;width:47.5px;height:22.2px;background:#fff;border:1px solid #e3e5e8;border-radius:11.100px;"></div>
<svg class="i" style="left:848.5px;top:560.2px;" width="18" height="18" viewBox="0 0 18 18"><circle cx="9" cy="9" r="5.8999999999999995" fill="none" stroke="#0b5229" stroke-width="1.500"/><path d="M5.800 9.200L8.100 11.500L12.300 7.100" fill="none" stroke="#0b5229" stroke-width="1.500"/></svg>
<svg class="i" style="left:873.7px;top:566.2px;" width="10" height="6" viewBox="0 0 10 6"><path d="M1.70 1.30H8.30L5 4.70Z" fill="#3c4043"/></svg>
<svg class="i" style="left:0px;top:0px;pointer-events:none" width="1536" height="864" viewBox="0 0 1536 864"><rect x="383" y="594" width="1" height="164.500" fill="#e3e5e8"/><rect x="525" y="594" width="1" height="164.500" fill="#e3e5e8"/><rect x="667" y="594" width="1" height="164.500" fill="#e3e5e8"/><rect x="809" y="594" width="1" height="164.500" fill="#e3e5e8"/><rect x="378.300" y="621.2" width="5" height="1" fill="#e3e5e8"/><rect x="378.300" y="648.5" width="5" height="1" fill="#e3e5e8"/><rect x="378.300" y="675.8" width="5" height="1" fill="#e3e5e8"/><rect x="378.300" y="703.1" width="5" height="1" fill="#e3e5e8"/><rect x="378.300" y="730.4" width="5" height="1" fill="#e3e5e8"/><rect x="383" y="609" width="489" height="12" fill="#1a73e8"/><rect x="383" y="622" width="43" height="11" fill="#8ab4f8"/><rect x="383" y="637" width="126" height="11" fill="#1a73e8"/><rect x="383" y="649" width="22" height="12" fill="#8ab4f8"/><rect x="383" y="664" width="40" height="11" fill="#1a73e8"/><rect x="383" y="677" width="4" height="11" fill="#8ab4f8"/><rect x="383" y="691" width="23" height="11" fill="#1a73e8"/><rect x="383" y="704" width="6" height="11" fill="#8ab4f8"/><circle cx="307" cy="808.700" r="4.100" fill="#1a73e8"/><circle cx="371.200" cy="808.700" r="4.100" fill="#8ab4f8"/></svg>
<div class="t" style="top:603px;font-size:9.6px;color:#202124;letter-spacing:0.43px;left:303.26px;-webkit-text-stroke:0.120px currentColor;text-rendering:geometricPrecision;">Direct</div>
<div class="t" style="top:630px;font-size:9.6px;color:#202124;letter-spacing:0.31px;left:303.47px;-webkit-text-stroke:0.120px currentColor;text-rendering:geometricPrecision;">Organic Search</div>
<div class="t" style="top:658px;font-size:9.6px;color:#202124;letter-spacing:0.36px;left:303.47px;-webkit-text-stroke:0.120px currentColor;text-rendering:geometricPrecision;">Organic Social</div>
<div class="t" style="top:685px;font-size:9.6px;color:#202124;letter-spacing:0.37px;left:303.26px;-webkit-text-stroke:0.120px currentColor;text-rendering:geometricPrecision;">Referral</div>
<div class="t" style="top:712px;font-size:9.6px;color:#202124;letter-spacing:0.35px;left:303.47px;-webkit-text-stroke:0.120px currentColor;text-rendering:geometricPrecision;">Organic Video</div>
<div class="t" style="top:745px;font-size:9.6px;color:#55595e;left:183.5px;width:400px;text-align:center;text-rendering:geometricPrecision;">0</div>
<div class="t" style="top:745px;font-size:9.6px;color:#55595e;letter-spacing:0.09px;left:512.8px;text-rendering:geometricPrecision;">100 B</div>
<div class="t" style="top:745px;font-size:9.6px;color:#55595e;letter-spacing:-0.01px;left:654.86px;text-rendering:geometricPrecision;">200 B</div>
<div class="t" style="top:745px;font-size:9.6px;color:#55595e;letter-spacing:0.02px;left:796.86px;text-rendering:geometricPrecision;">300 B</div>
<div class="t" style="top:790px;font-size:9.6px;color:#55595e;letter-spacing:-0.21px;left:315.44px;text-rendering:geometricPrecision;">Özel aralık</div>
<div class="t" style="top:790px;font-size:9.6px;color:#55595e;letter-spacing:-0.04px;left:378.92px;text-rendering:geometricPrecision;">Karşılaştırılan özel aralık</div>
<div class="t" style="top:818px;font-size:11.2px;color:#1766e2;letter-spacing:0.36px;left:701.18px;-webkit-text-stroke:0.120px currentColor;">Kullanıcı edinme raporunu göster</div>
<svg class="i" style="left:885.3px;top:832px;" width="12" height="12" viewBox="0 0 12 12"><path d="M1 6H10.600M6.200 1.300L10.900 6L6.200 10.700" fill="none" stroke="#1766e2" stroke-width="1.250"/></svg>
</section>
<section>
<div class="t" style="top:545px;font-size:11.2px;color:#2a2d31;letter-spacing:0.63px;left:943.47px;-webkit-text-stroke:0.120px currentColor;">Oturumlar</div>
<svg class="i" style="left:1001.4px;top:562.6px;" width="10" height="6" viewBox="0 0 10 6"><path d="M1.30 1.10H8.70L5 4.90Z" fill="#5f6368"/></svg>
<div class="t" style="top:545px;font-size:11.2px;color:#2a2d31;letter-spacing:0.42px;left:1015.88px;-webkit-text-stroke:0.120px currentColor;">, Oturumla ilişkilendirilen varsayılan kanal grubu</div>
<svg class="i" style="left:1275.2px;top:562.6px;" width="10" height="6" viewBox="0 0 10 6"><path d="M1.30 1.10H8.70L5 4.90Z" fill="#5f6368"/></svg>
<div class="b" style="left:1420.3px;top:557.5px;width:47.5px;height:22.2px;background:#fff;border:1px solid #e3e5e8;border-radius:11.100px;"></div>
<svg class="i" style="left:1424.6px;top:560.2px;" width="18" height="18" viewBox="0 0 18 18"><circle cx="9" cy="9" r="5.8999999999999995" fill="none" stroke="#0b5229" stroke-width="1.500"/><path d="M5.800 9.200L8.100 11.500L12.300 7.100" fill="none" stroke="#0b5229" stroke-width="1.500"/></svg>
<svg class="i" style="left:1449.8px;top:566.2px;" width="10" height="6" viewBox="0 0 10 6"><path d="M1.70 1.30H8.30L5 4.70Z" fill="#3c4043"/></svg>
<div class="t" style="top:582px;font-size:9.6px;color:#3c4043;letter-spacing:0.47px;left:943.44px;text-rendering:geometricPrecision;">OTURUMLA İLİŞKİLENDİRİLEN VARSAYILAN KANAL GR...</div>
<svg class="i" style="left:943.8px;top:608px;" width="273.20000000000005" height="1" viewBox="0 0 273.20000000000005 1"><line x1="0" y1="0.500" x2="273.20000000000005" y2="0.500" stroke="#8a8f94" stroke-width="1" stroke-dasharray="2,1.700"/></svg>
<div class="t" style="top:582px;font-size:9.6px;color:#3c4043;letter-spacing:0.41px;left:1404.32px;text-rendering:geometricPrecision;">OTURUMLAR</div>
<svg class="i" style="left:1404.3px;top:608px;" width="63.700000000000045" height="1" viewBox="0 0 63.700000000000045 1"><line x1="0" y1="0.500" x2="63.700000000000045" y2="0.500" stroke="#8a8f94" stroke-width="1" stroke-dasharray="2,1.700"/></svg>
<div class="b" style="left:944px;top:613px;width:524px;height:1px;background:#dcdee1;"></div>
<div class="t" style="top:608px;font-size:9.6px;color:#202124;letter-spacing:0.43px;left:943.25px;-webkit-text-stroke:0.120px currentColor;text-rendering:geometricPrecision;">Direct</div>
<div class="t" style="top:608px;font-size:9.6px;color:#3c4043;letter-spacing:0.37px;left:1317.12px;text-rendering:geometricPrecision;">607 B</div>
<svg class="i" style="left:1422.8px;top:621px;" width="8" height="9" viewBox="0 0 8 9"><path d="M3.700 8V2M1.500 4.300L3.700 2L5.900 4.300" fill="none" stroke="#137333" stroke-width="1.250"/></svg>
<div class="t" style="top:606px;font-size:8.8px;color:#5f6368;letter-spacing:0.07px;left:1430.49px;text-rendering:geometricPrecision;">%1.198,5</div>
<div class="b" style="left:944px;top:639.3px;width:524px;height:1.2px;background:#e6e8eb;"></div>
<div class="b" style="left:944px;top:638.6999999999999px;width:342.7px;height:2px;background:#1a73e8;"></div>
<div class="t" style="top:634px;font-size:9.6px;color:#202124;letter-spacing:0.31px;left:943.47px;-webkit-text-stroke:0.120px currentColor;text-rendering:geometricPrecision;">Organic Search</div>
<div class="t" style="top:634px;font-size:9.6px;color:#3c4043;letter-spacing:0.37px;left:1317.11px;text-rendering:geometricPrecision;">244 B</div>
<svg class="i" style="left:1431.2px;top:647px;" width="8" height="9" viewBox="0 0 8 9"><path d="M3.700 8V2M1.500 4.300L3.700 2L5.900 4.300" fill="none" stroke="#137333" stroke-width="1.250"/></svg>
<div class="t" style="top:632px;font-size:8.8px;color:#5f6368;letter-spacing:-0.14px;left:1438.94px;text-rendering:geometricPrecision;">%935,4</div>
<div class="b" style="left:944px;top:665.05px;width:524px;height:1.2px;background:#e6e8eb;"></div>
<div class="b" style="left:944px;top:664.4499999999999px;width:137.7px;height:2px;background:#1a73e8;"></div>
<div class="t" style="top:659px;font-size:9.6px;color:#202124;letter-spacing:0.37px;left:943.47px;-webkit-text-stroke:0.120px currentColor;text-rendering:geometricPrecision;">Organic Social</div>
<div class="t" style="top:659px;font-size:9.6px;color:#3c4043;letter-spacing:0.43px;left:1322.54px;text-rendering:geometricPrecision;">60 B</div>
<svg class="i" style="left:1422.8px;top:672px;" width="8" height="9" viewBox="0 0 8 9"><path d="M3.700 8V2M1.500 4.300L3.700 2L5.900 4.300" fill="none" stroke="#137333" stroke-width="1.250"/></svg>
<div class="t" style="top:657px;font-size:8.8px;color:#5f6368;letter-spacing:0.07px;left:1430.49px;text-rendering:geometricPrecision;">%1.339,0</div>
<div class="b" style="left:944px;top:690.8px;width:524px;height:1.2px;background:#e6e8eb;"></div>
<div class="b" style="left:944px;top:690.1999999999999px;width:33.7px;height:2px;background:#1a73e8;"></div>
<div class="t" style="top:685px;font-size:9.6px;color:#202124;letter-spacing:0.39px;left:943.25px;-webkit-text-stroke:0.120px currentColor;text-rendering:geometricPrecision;">Referral</div>
<div class="t" style="top:685px;font-size:9.6px;color:#3c4043;letter-spacing:0.4px;left:1322.65px;text-rendering:geometricPrecision;">41 B</div>
<svg class="i" style="left:1431.2px;top:698px;" width="8" height="9" viewBox="0 0 8 9"><path d="M3.700 8V2M1.500 4.300L3.700 2L5.900 4.300" fill="none" stroke="#137333" stroke-width="1.250"/></svg>
<div class="t" style="top:683px;font-size:8.8px;color:#5f6368;letter-spacing:-0.14px;left:1438.94px;text-rendering:geometricPrecision;">%729,0</div>
<div class="b" style="left:944px;top:716.55px;width:524px;height:1.2px;background:#e6e8eb;"></div>
<div class="b" style="left:944px;top:715.9499999999999px;width:23px;height:2px;background:#1a73e8;"></div>
<div class="t" style="top:711px;font-size:9.6px;color:#202124;letter-spacing:0.47px;left:943.25px;-webkit-text-stroke:0.120px currentColor;text-rendering:geometricPrecision;">Unassigned</div>
<div class="t" style="top:711px;font-size:9.6px;color:#3c4043;letter-spacing:0.16px;left:1320.67px;text-rendering:geometricPrecision;">2,6 B</div>
<svg class="i" style="left:1422.8px;top:724px;" width="8" height="9" viewBox="0 0 8 9"><path d="M3.700 8V2M1.500 4.300L3.700 2L5.900 4.300" fill="none" stroke="#137333" stroke-width="1.250"/></svg>
<div class="t" style="top:709px;font-size:8.8px;color:#5f6368;letter-spacing:0.17px;left:1430.49px;text-rendering:geometricPrecision;">%1.711,3</div>
<div class="b" style="left:944px;top:742.3px;width:524px;height:1.2px;background:#e6e8eb;"></div>
<div class="b" style="left:944px;top:741.6999999999999px;width:1.5px;height:2px;background:#1a73e8;"></div>
<div class="t" style="top:736px;font-size:9.6px;color:#202124;letter-spacing:0.4px;left:943.47px;-webkit-text-stroke:0.120px currentColor;text-rendering:geometricPrecision;">Organic Video</div>
<div class="t" style="top:736px;font-size:9.6px;color:#3c4043;right:192.7px;text-rendering:geometricPrecision;">3</div>
<div class="b" style="left:1465.5px;top:754.2px;width:2.5px;height:1px;background:#5f6368;"></div>
<div class="t" style="top:818px;font-size:11.2px;color:#1766e2;letter-spacing:0.39px;left:1292.92px;-webkit-text-stroke:0.120px currentColor;">Trafik edinme raporunu göster</div>
<svg class="i" style="left:1461.3px;top:832px;" width="12" height="12" viewBox="0 0 12 12"><path d="M1 6H10.600M6.200 1.300L10.900 6L6.200 10.700" fill="none" stroke="#1766e2" stroke-width="1.250"/></svg>
</section>
</main>
<div class="b" style="left:1496.3px;top:794.8px;width:32px;height:32px;background:#fff;border-radius:50%;box-shadow:0 1px 2px rgba(60,64,67,.3),0 1px 4px 1px rgba(60,64,67,.15);"></div>
<svg class="i" style="left:1502.6px;top:801.7px;" width="19.2" height="19.2" viewBox="0 0 24 24" fill="#202124"><path d="M20 2H4c-1.1 0-1.99.9-1.99 2L2 22l4-4h14c1.1 0 2-.9 2-2V4c0-1.1-.9-2-2-2zm0 14H5.17l-.59.59-.58.58V4h16v12zm-9-4h2v2h-2zm0-6h2v4h-2z"/></svg>
<div class="b" style="left:1534px;top:51px;width:2px;height:334px;background:#dadce0;"></div>
</body>
</html>
